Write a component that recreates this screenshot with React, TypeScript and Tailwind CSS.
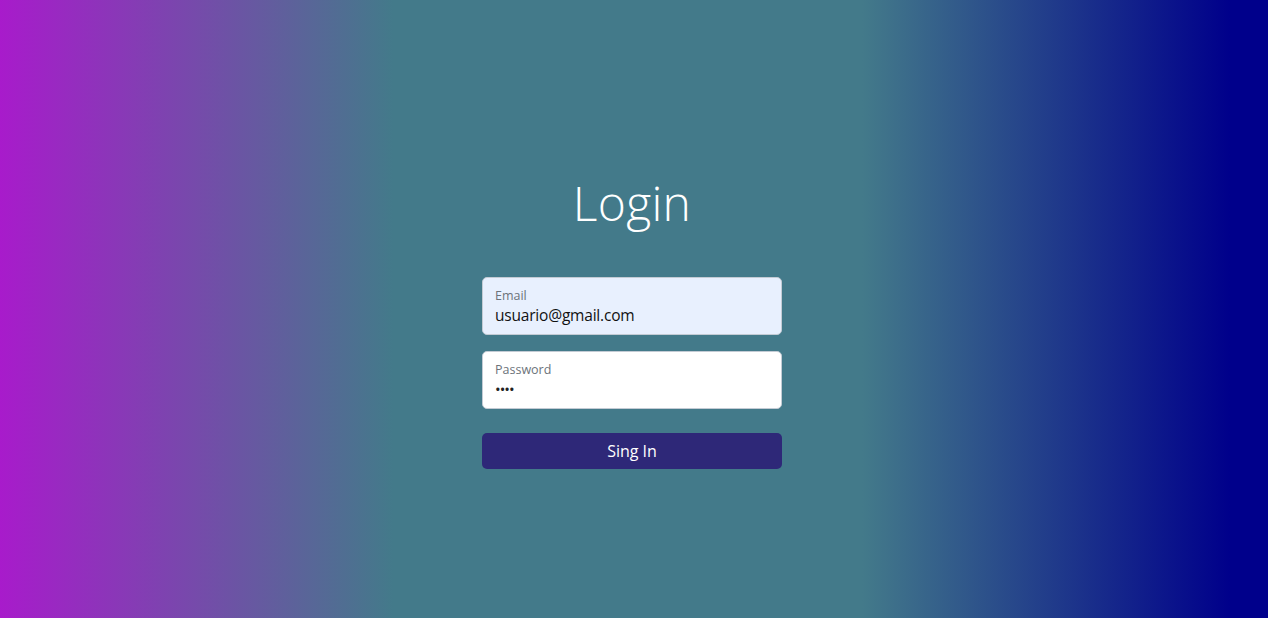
import React from "react";

export default function App() {
  return (
    <div
      className="w-full h-[618px] flex flex-col items-center pr-[4px] bg-[linear-gradient(to_right,#a81bcb_0%,#437a8a_31%,#437a8a_68%,#00008b_97%)]"
      style={{ fontFamily: '"Open Sans", "Noto Sans", sans-serif' }}
    >
      <h1 className="mt-[172px] text-[48px] leading-[62px] font-light text-white tracking-[0.3px]">
        Login
      </h1>
      <div className="mt-[43px] w-[300px] flex flex-col">
        <div className="h-[58px] rounded-[5px] border border-[#c3cbd4] bg-[#e8f0fe] px-[12px] pt-[10px]">
          <div className="text-[12.5px] leading-[16px] text-[#6c737a]">Email</div>
          <div className="text-[15.5px] leading-[20px] text-[#111] mt-[1px] tracking-[-0.2px]">usuario@gmail.com</div>
        </div>
        <div className="mt-[16px] h-[58px] rounded-[5px] border border-[#c3cbd4] bg-white px-[12px] pt-[10px]">
          <div className="text-[12.5px] leading-[16px] text-[#6c737a]">Password</div>
          <div className="text-[15px] leading-[20px] text-[#222] mt-[1px] tracking-[-1px]">••••</div>
        </div>
        <button className="mt-[24px] h-[36px] rounded-[5px] bg-[#2e2878] text-white text-[16px]">
          Sing In
        </button>
      </div>
    </div>
  );
}
